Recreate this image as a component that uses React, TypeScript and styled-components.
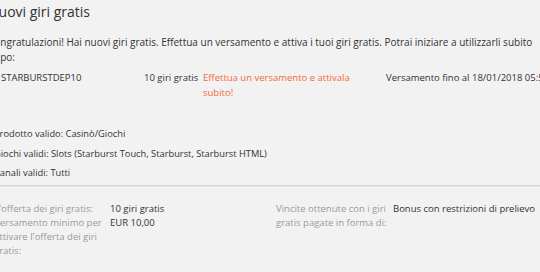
import React from 'react';
import styled, { createGlobalStyle } from 'styled-components';

const GlobalStyle = createGlobalStyle`
  body {
    margin: 0;
    background: #f2f2f2;
    font-family: "Open Sans", "Liberation Sans", sans-serif;
    color: #333;
    overflow: hidden;
  }
`;

const App: React.FC = () => {
  return (
    <>
      <GlobalStyle />
      <Page>
        <Title>Nuovi giri gratis</Title>
        <Intro>
          Congratulazioni! Hai nuovi giri gratis. Effettua un versamento e attiva i tuoi giri gratis.
          Potrai iniziare a utilizzarli subito dopo:
        </Intro>
        <CodeRow>
          <Cell>STARBURSTDEP10</Cell>
          <Cell>10 giri gratis</Cell>
          <Cell $accent>Effettua un versamento e attivala subito!</Cell>
          <Cell>Versamento fino al 18/01/2018 05:59</Cell>
        </CodeRow>
        <ValidList>
          <ValidItem>Prodotto valido: Casinò/Giochi</ValidItem>
          <ValidItem>Giochi validi: Slots (Starburst Touch, Starburst, Starburst HTML)</ValidItem>
          <ValidItem>Canali validi: Tutti</ValidItem>
        </ValidList>
        <Divider />
        <Details>
          <Label>
            L'offerta dei giri gratis:
            <br />
            Versamento minimo per attivare l'offerta dei giri gratis:
          </Label>
          <Value>
            10 giri gratis
            <br />
            EUR 10,00
          </Value>
          <Label>Vincite ottenute con i giri gratis pagate in forma di:</Label>
          <Value>Bonus con restrizioni di prelievo</Value>
        </Details>
      </Page>
    </>
  );
};

const Page = styled.div`
  margin-left: -12px;
  width: 572px;
  font-size: 10px;
`;

const Title = styled.h1`
  margin: 0;
  padding-top: 2px;
  font-size: 14px;
  font-weight: 400;
  line-height: 20px;
  color: #333;
`;

const Intro = styled.p`
  margin: 13px 0 0;
  width: 555px;
  line-height: 15px;
`;

const CodeRow = styled.div`
  display: grid;
  grid-template-columns: 143px 59px 183px 1fr;
  margin-top: 5px;
  padding-left: 13px;
  font-size: 9.5px;
  line-height: 15px;
`;

const Cell = styled.div<{ $accent?: boolean }>`
  color: ${(p) => (p.$accent ? '#f4683c' : '#333')};
  padding-right: 15px;
  white-space: ${(p) => (p.$accent ? 'normal' : 'nowrap')};
`;

const ValidList = styled.div`
  margin-top: 26px;
  padding-left: 6px;
  font-size: 9.3px;
`;

const ValidItem = styled.div`
  line-height: 15px;
  margin-bottom: 4.5px;
`;

const Divider = styled.hr`
  margin: 0;
  border: 0;
  border-top: 1px solid #d6d6d6;
  border-bottom: 1px solid #e4e4e4;
`;

const Details = styled.div`
  display: grid;
  grid-template-columns: 116px 166px 117px 1fr;
  padding: 15px 0 0 6px;
  font-size: 9.5px;
  line-height: 14px;
`;

const Label = styled.div`
  color: #9a9a9a;
`;

const Value = styled.div`
  color: #333;
`;

export default App;
